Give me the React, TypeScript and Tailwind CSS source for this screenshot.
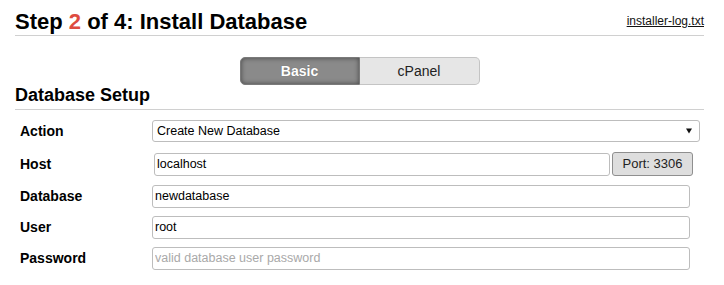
import React from 'react';

const FIELDS = [
  { label: 'Database', value: 'newdatabase', placeholder: '' },
  { label: 'User', value: 'root', placeholder: '' },
  { label: 'Password', value: '', placeholder: 'valid database user password' },
];

export default function App() {
  return (
    <div className="w-[724px] h-[285px] bg-white font-['Liberation_Sans',Arial,sans-serif] text-black">
      <div className="pl-[15px] pr-[20px]">
        {/* Header */}
        <div className="flex items-start justify-between border-b border-[#d0d0d0] pb-[1px]">
          <h1 className="mt-[9px] text-[22px] leading-[25px] font-bold">
            Step <span className="text-[#de4b3f]">2</span> of 4: Install Database
          </h1>
          <a href="#" className="mt-[14px] text-[12px] leading-[14px] text-[#111] underline">
            installer-log.txt
          </a>
        </div>

        {/* Mode toggle */}
        <div className="mt-[21px] flex justify-center">
          <button className="w-[120px] h-[28px] rounded-l-[5px] border border-[#7a7a7a] bg-[#8a8a8a] shadow-[inset_0_0_5px_rgba(0,0,0,0.5)] text-[14px] font-bold text-white [text-shadow:0_0_1px_rgba(0,0,0,0.3)]">
            Basic
          </button>
          <button className="w-[120px] h-[28px] rounded-r-[5px] border border-l-0 border-[#c4c4c4] bg-[#e6e6e6] text-[14px] text-[#222]">
            cPanel
          </button>
        </div>

        {/* Section */}
        <h2 className="text-[18px] leading-[20px] font-bold border-b border-[#d0d0d0] pb-[4px]">
          Database Setup
        </h2>

        <div className="flex flex-col text-[12.5px]">
          <div className="mt-[10px] flex items-center h-[22px]">
            <label className="w-[137px] pl-[5px] text-[14px] leading-[16px] font-bold">Action</label>
            <div className="relative w-[548px] h-[22px] rounded-[3px] border border-[#bdbdbd] bg-white flex items-center pl-[4px]">
              <span>Create New Database</span>
              <svg className="absolute right-[7px] top-[7px]" width="6" height="6" viewBox="0 0 6 6">
                <path d="M0 0.5 L6 0.5 L3 5.5 Z" fill="#111" />
              </svg>
            </div>
          </div>

          <div className="mt-[10px] flex items-center h-[24px]">
            <label className="w-[139px] pl-[5px] text-[14px] leading-[16px] font-bold">Host</label>
            <input
              readOnly
              defaultValue="localhost"
              className="w-[456px] h-[23px] rounded-[3px] border border-[#bdbdbd] bg-white pl-[2px] outline-none"
            />
            <button className="ml-[2px] w-[81px] h-[24px] rounded-[3px] border border-[#8f8f8f] bg-[#dedede] text-[13px] text-[#222]">
              Port: 3306
            </button>
          </div>

          {FIELDS.map((f) => (
            <div key={f.label} className="mt-[9px] flex items-center h-[22px]">
              <label className="w-[137px] pl-[5px] text-[14px] leading-[16px] font-bold">{f.label}</label>
              <input
                readOnly
                defaultValue={f.value}
                placeholder={f.placeholder}
                className="w-[538px] h-[23px] rounded-[3px] border border-[#bdbdbd] bg-white pl-[2px] outline-none placeholder:text-[#a9a9a9]"
              />
            </div>
          ))}
        </div>
      </div>
    </div>
  );
}
